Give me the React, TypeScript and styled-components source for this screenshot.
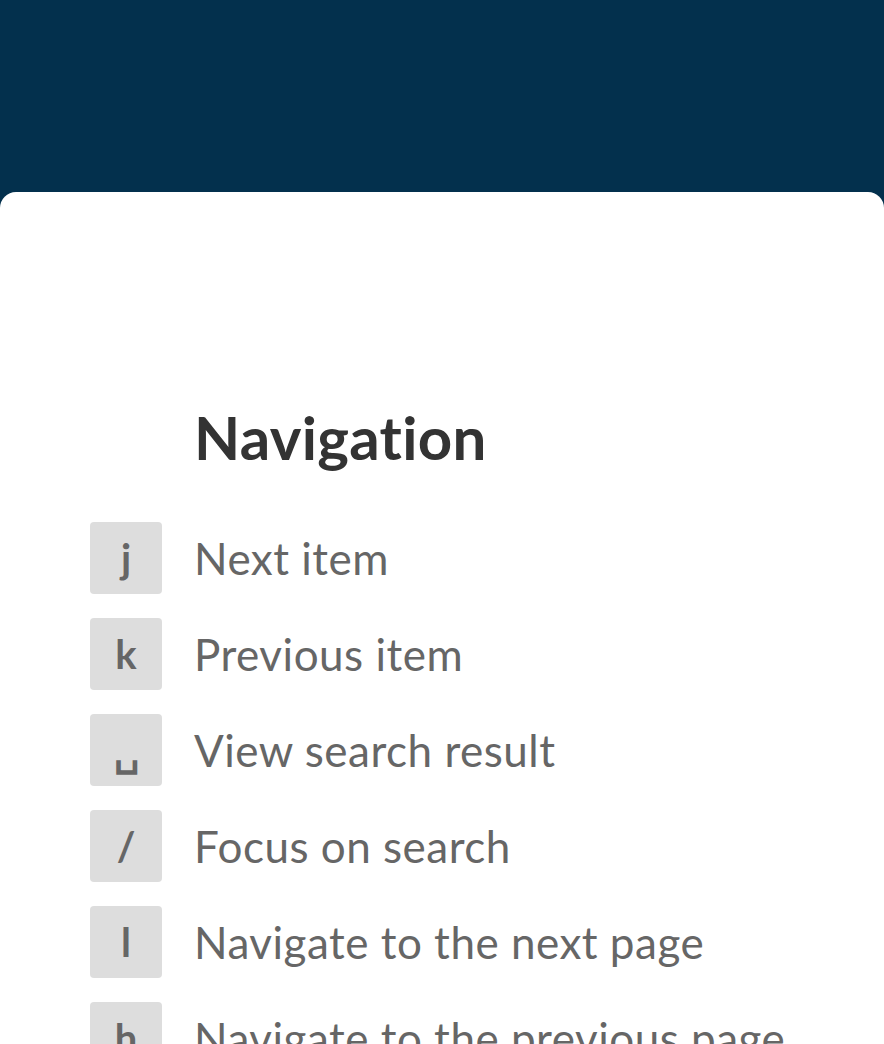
import React from "react";
import styled, { createGlobalStyle } from "styled-components";

const Global = createGlobalStyle`
  html, body { margin: 0; padding: 0; background: #03304d; }
  body { font-family: Lato, "Open Sans", sans-serif; }
`;

const Page = styled.div`
  min-height: 1044px;
  display: flex;
  flex-direction: column;
  background: #03304d;
`;

const Header = styled.header`
  height: 192px;
  flex-shrink: 0;
  background: #03304d;
`;

const Card = styled.main`
  flex: 1;
  background: #ffffff;
  border-radius: 16px 16px 0 0;
  padding: 213px 0 0 90px;
  overflow: hidden;
`;

const Section = styled.section`
  display: flex;
  flex-direction: column;
`;

const Heading = styled.h2`
  margin: 0 0 53px 104px;
  font-family: Lato, sans-serif;
  font-weight: 700;
  font-size: 60px;
  line-height: 64px;
  letter-spacing: 0.3px;
  color: #333333;
`;

const List = styled.ul`
  list-style: none;
  margin: 0;
  padding: 0;
  display: flex;
  flex-direction: column;
  gap: 24px;
`;

const Row = styled.li`
  display: flex;
  align-items: center;
  gap: 32px;
  height: 72px;
`;

const Key = styled.kbd`
  width: 72px;
  height: 72px;
  flex-shrink: 0;
  display: flex;
  align-items: center;
  justify-content: center;
  background: #dddddd;
  border-radius: 4px;
  font-family: Lato, sans-serif;
  font-weight: 700;
  font-size: 40px;
  color: #666666;
`;

const Desc = styled.span`
  font-family: Lato, sans-serif;
  font-weight: 400;
  font-size: 44px;
  letter-spacing: 0.5px;
  color: #666666;
  white-space: nowrap;
`;

const items: [string, string][] = [
  ["j", "Next item"],
  ["k", "Previous item"],
  ["\u2423", "View search result"],
  ["/", "Focus on search"],
  ["l", "Navigate to the next page"],
  ["h", "Navigate to the previous page"],
];

export default function App() {
  return (
    <>
      <Global />
      <Page>
        <Header />
        <Card>
          <Section>
            <Heading>Navigation</Heading>
            <List>
              {items.map(([k, d]) => (
                <Row key={k}>
                  <Key>{k}</Key>
                  <Desc>{d}</Desc>
                </Row>
              ))}
            </List>
          </Section>
        </Card>
      </Page>
    </>
  );
}
